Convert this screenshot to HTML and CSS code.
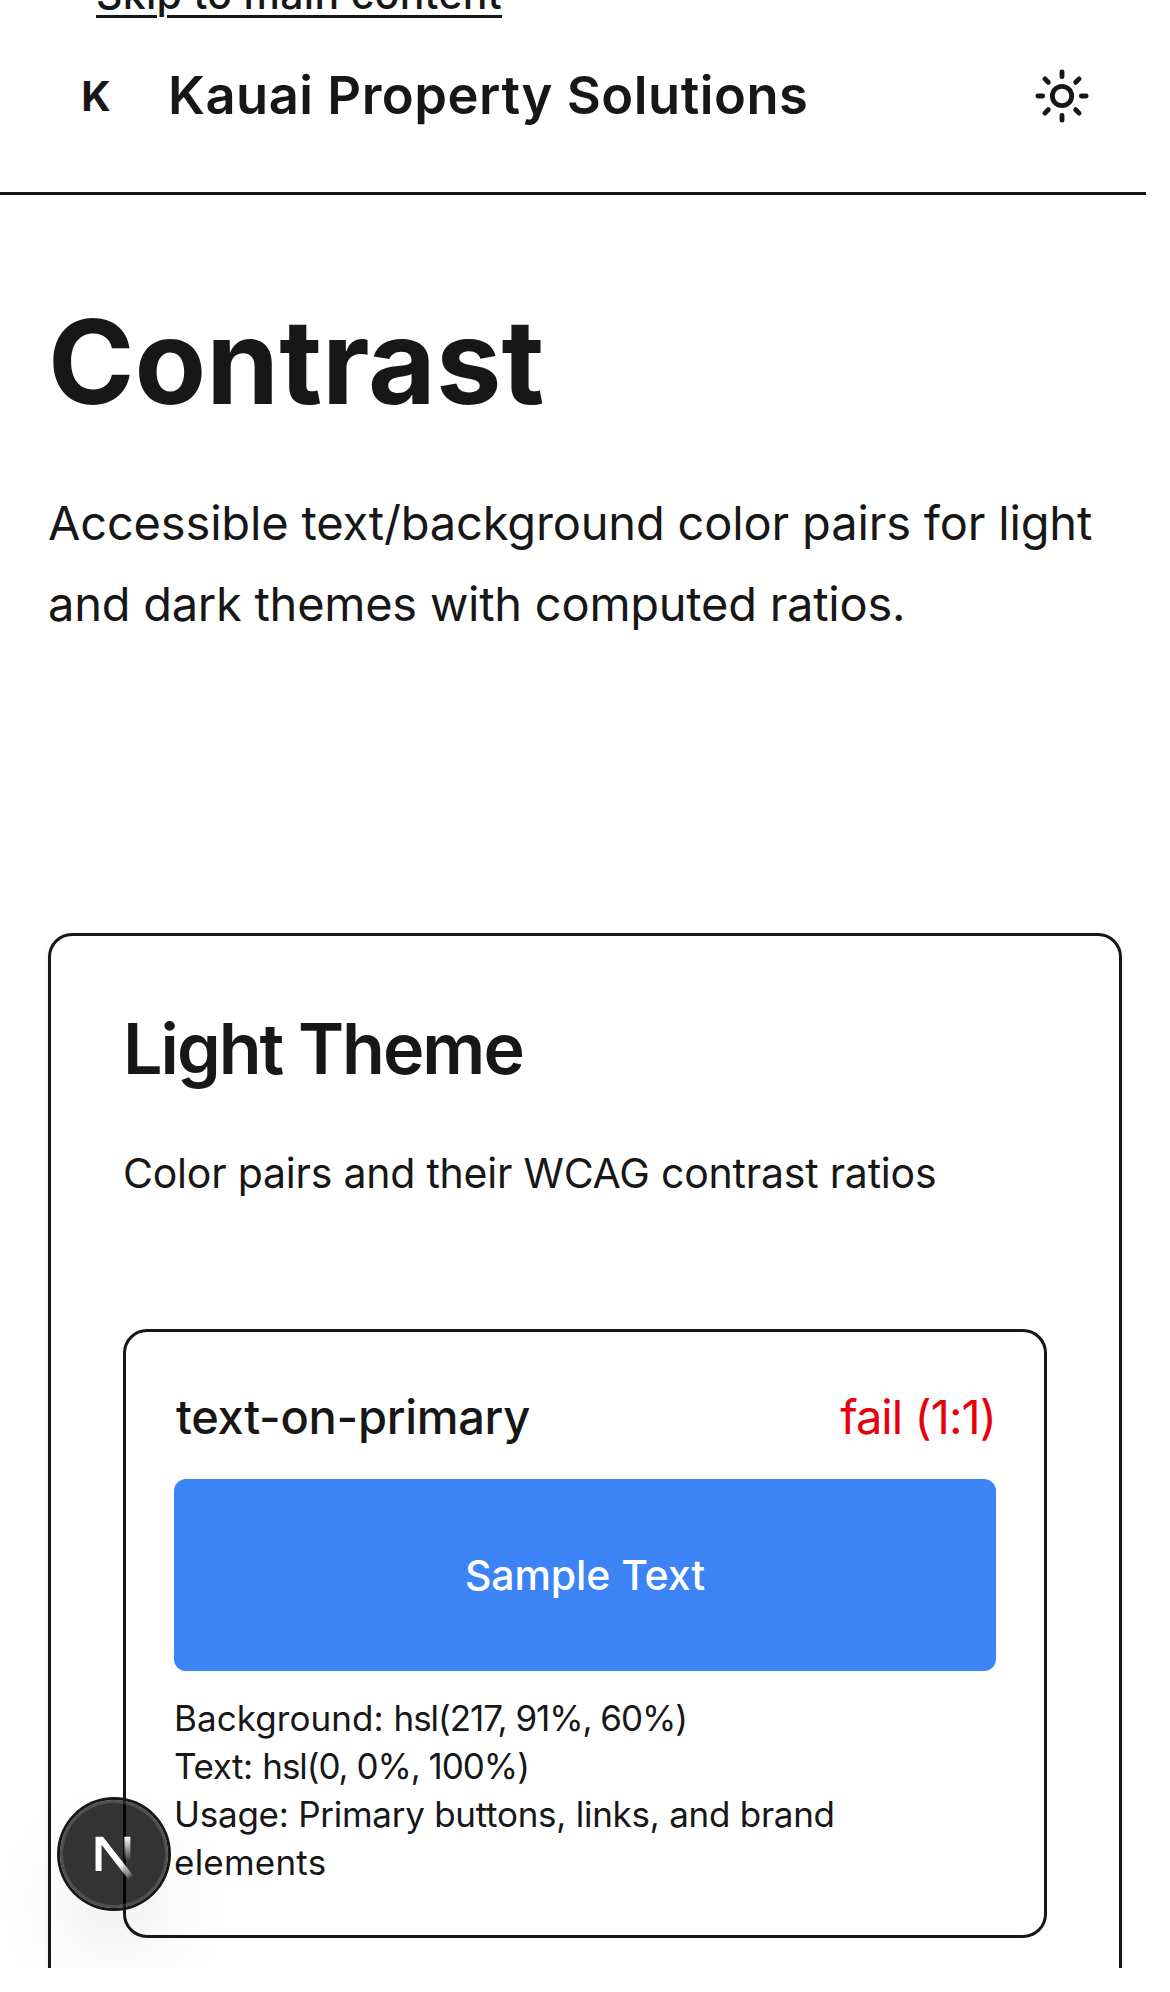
FILE: index.html
```html
<!DOCTYPE html>
<html lang="en">
<head>
<meta charset="utf-8">
<title>Contrast – Kauai Property Solutions</title>
<link rel="stylesheet" href="styles.css">
</head>
<body>
<div class="page">
  <a class="skip-link" href="#main">Skip to main content</a>
  <header class="site-header">
    <span class="logo">K</span>
    <span class="site-name">Kauai Property Solutions</span>
    <button class="theme-toggle" aria-label="Toggle theme">
      <svg viewBox="0 0 24 24" width="58" height="58" fill="none" stroke="currentColor" stroke-width="2" stroke-linecap="round" stroke-linejoin="round">
        <circle cx="12" cy="12" r="4"/>
        <path d="M12 2v2M12 20v2M4.93 4.93l1.41 1.41M17.66 17.66l1.41 1.41M2 12h2M20 12h2M6.34 17.66l-1.41 1.41M19.07 4.93l-1.41 1.41"/>
      </svg>
    </button>
  </header>
  <main id="main" class="content">
    <h1 class="title">Contrast</h1>
    <p class="lead"><span class="lead-first">Accessible text/background color pairs for light</span><br><span class="lead-second">and dark themes with computed ratios.</span></p>
    <section class="card">
      <h2 class="card-title">Light Theme</h2>
      <p class="card-desc">Color pairs and their WCAG contrast ratios</p>
      <article class="pair">
        <div class="pair-head">
          <h3 class="pair-name">text-on-primary</h3>
          <span class="pair-result">fail (1:1)</span>
        </div>
        <div class="sample">Sample Text</div>
        <div class="details">
          <div><span class="label-bg">Background: </span><span class="value">hsl(217, 91%, 60%)</span></div>
          <div><span class="label-text">Text: </span><span class="value">hsl(0, 0%, 100%)</span></div>
          <div class="detail-usage">Usage: Primary buttons, links, and brand<br><span class="detail-last">elements</span></div>
        </div>
      </article>
    </section>
  </main>
  <div class="dev-badge">
    <svg viewBox="0 0 40 40" width="120" height="120" fill="none">
      <defs>
        <linearGradient id="diagonal" x1="22.3" y1="23" x2="26" y2="28" gradientUnits="userSpaceOnUse">
          <stop stop-color="#fff"/><stop offset=".604" stop-color="#fff" stop-opacity="0.5"/><stop offset="1" stop-color="#fff" stop-opacity="0"/>
        </linearGradient>
        <linearGradient id="stem" x1="0" y1="14.3" x2="0" y2="22.5" gradientUnits="userSpaceOnUse">
          <stop stop-color="#fff"/><stop offset="1" stop-color="#fff" stop-opacity="0"/>
        </linearGradient>
      </defs>
      <path d="M13.85 25.7V14.25h2.45L26.4 27.2l-1.6 1.3L15.85 16.9v8.8z" fill="url(#diagonal)"/>
      <path d="M23.45 14.25h2v8.3h-2z" fill="url(#stem)"/>
    </svg>
  </div>
</div>
</body>
</html>
```
FILE: styles.css
```css
* { box-sizing: border-box; }
body { margin: 0; background: #fff; color: #171717; font-family: Inter, "Liberation Sans", sans-serif; }
h1, h2, h3, p { margin: 0; }

.page { position: relative; width: 1146px; height: 1968px; overflow: hidden; }

.skip-link {
  position: absolute; top: -36px; left: 96px;
  font-size: 41px; font-weight: 500; line-height: 60px; letter-spacing: 0.29px; white-space: nowrap;
  color: inherit; text-decoration: underline; text-decoration-thickness: 3px; text-underline-offset: 6px;
}

.site-header {
  display: flex; align-items: center; height: 195px; padding: 0 55px 0 48px;
  border-bottom: 3px solid #171717;
}
.logo { width: 96px; text-align: center; font-size: 41px; font-weight: 700; line-height: 60px; }
.site-name { margin-left: 24px; padding-bottom: 2px; font-size: 52.5px; font-weight: 600; line-height: 84px; letter-spacing: 0.497px; white-space: nowrap; }
.theme-toggle { display: flex; margin-left: auto; padding: 0; border: 0; background: none; color: inherit; }

.content { padding: 107px 24px 0 48px; }
.title { font-size: 117px; font-weight: 700; line-height: 120px; letter-spacing: 0; }
.lead { margin-top: 60px; font-size: 47px; line-height: 81px; white-space: nowrap; }
.lead-first { letter-spacing: -0.168px; }
.lead-second { letter-spacing: -0.253px; }

.card {
  height: 1100px; margin-top: 289px; padding: 77px 72px 0;
  border: 3px solid #171717; border-radius: 24px; box-shadow: 0 3px 6px rgba(0, 0, 0, 0.08);
}
.card-title { font-size: 70px; font-weight: 600; line-height: 72px; letter-spacing: -2px; }
.card-desc { margin-top: 58px; font-size: 41px; line-height: 60px; letter-spacing: -0.223px; white-space: nowrap; }

.pair { margin-top: 126px; padding: 48px 48px 49px; border: 3px solid #171717; border-radius: 24px; }
.pair-head { display: flex; justify-content: space-between; font-size: 47px; line-height: 74px; }
.pair-name { padding-left: 2px; font-size: inherit; font-weight: 500; letter-spacing: -0.3px; }
.pair-result { color: #e7000b; letter-spacing: -0.928px; }
.sample {
  display: flex; align-items: center; justify-content: center; height: 192px; margin-top: 25px;
  border-radius: 12px; background: #3c83f6; color: #fff; font-size: 41px; font-weight: 500; letter-spacing: -0.09px;
}
.details { margin-top: 23px; font-size: 35px; line-height: 48px; white-space: nowrap; }
.label-bg { letter-spacing: 0.06px; }
.label-text { letter-spacing: -0.4px; }
.value { letter-spacing: -1.05px; }
.detail-usage { letter-spacing: -0.26px; }
.detail-last { letter-spacing: 0.223px; }

.dev-badge {
  position: absolute; left: 60px; top: 1800px; width: 108px; height: 108px;
  display: flex; align-items: center; justify-content: center;
  border-radius: 50%; background: rgba(0, 0, 0, 0.8);
  box-shadow: 0 0 0 3px #171717, inset 0 0 0 3px rgba(255, 255, 255, 0.14), 0 48px 96px -24px rgba(0, 0, 0, 0.24);
}
.dev-badge svg { flex: none; }
```
